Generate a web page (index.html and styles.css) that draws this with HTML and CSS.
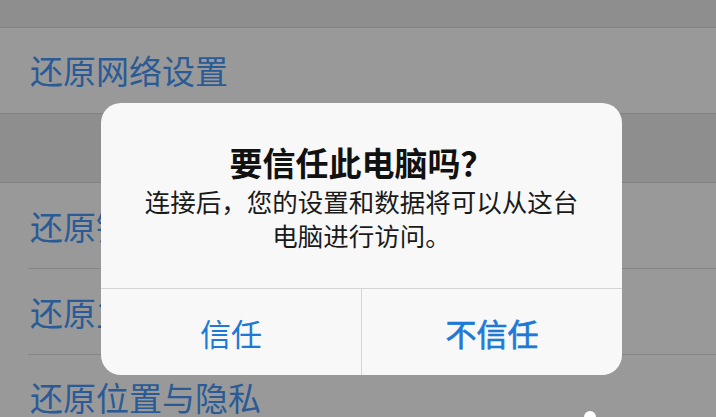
FILE: index.html
```html
<!DOCTYPE html>
<html lang="zh-CN">
<head>
  <meta charset="UTF-8">
  <meta name="viewport" content="width=device-width, initial-scale=1.0">
  <title>还原</title>
  <link rel="stylesheet" href="styles.css">
</head>
<body>
  <div class="screen">
    <div class="top-band"></div>

    <div class="group">
      <div class="row">还原网络设置</div>
    </div>

    <div class="band"></div>

    <div class="group">
      <div class="row tall inset">还原键盘字典</div>
      <div class="row tall inset">还原主屏幕布局</div>
      <div class="row">还原位置与隐私</div>
    </div>

    <div class="alert">
      <div class="alert-body">
        <h3 class="alert-title">要信任此电脑吗？</h3>
        <p class="alert-text">连接后，您的设置和数据将可以从这台<br>电脑进行访问。</p>
      </div>
      <div class="alert-actions">
        <button class="alert-btn">信任</button>
        <button class="alert-btn strong">不信任</button>
      </div>
    </div>

    <div class="mark"></div>
  </div>
</body>
</html>
```

FILE: styles.css
```css
* { box-sizing: border-box; }
body {
  margin: 0;
  padding: 0;
  background: #999999;
  font-family: "Noto Sans CJK SC", "Noto Sans", sans-serif;
}
.screen {
  position: relative;
  width: 716px;
  height: 417px;
  overflow: hidden;
  background: #999999;
}
.top-band {
  height: 28px;
  background: #8e8e8e;
  border-bottom: 1px solid #828282;
}
.group {
  background: #999999;
}
.row {
  height: 85px;
  padding-left: 30px;
  display: flex;
  align-items: center;
  font-size: 33px;
  color: #2a5b96;
  line-height: 1;
}
.row.tall {
  height: 86px;
}
.row.inset {
  position: relative;
}
.row.inset::after {
  content: "";
  position: absolute;
  left: 28px;
  right: 0;
  bottom: 0;
  height: 1px;
  background: #858585;
}
.band {
  height: 70px;
  background: #8e8e8e;
  border-top: 1px solid #828282;
  border-bottom: 1px solid #828282;
}
.alert {
  position: absolute;
  left: 101px;
  top: 103px;
  width: 521px;
  height: 272px;
  background: #f8f8f8;
  border-radius: 20px;
  display: flex;
  flex-direction: column;
  overflow: hidden;
}
.alert-body {
  height: 186px;
  padding-top: 39px;
  text-align: center;
  border-bottom: 1px solid #d4d4d4;
}
.alert-title {
  margin: 0;
  font-size: 33px;
  font-weight: 700;
  line-height: 40px;
  color: #111111;
}
.alert-text {
  margin: 2px 0 0;
  font-size: 25.5px;
  line-height: 34px;
  color: #1a1a1a;
}
.alert-actions {
  flex: 1;
  display: flex;
}
.alert-btn {
  flex: 1;
  background: none;
  border: none;
  padding: 0;
  font-family: inherit;
  font-size: 31px;
  color: #1c7ad6;
  cursor: pointer;
}
.alert-btn + .alert-btn {
  border-left: 1px solid #d4d4d4;
}
.alert-btn.strong {
  -webkit-text-stroke: 0.7px #1c7ad6;
}
.mark {
  position: absolute;
  left: 584px;
  top: 411px;
  width: 12px;
  height: 12px;
  border-radius: 50%;
  background: #ffffff;
}
```
